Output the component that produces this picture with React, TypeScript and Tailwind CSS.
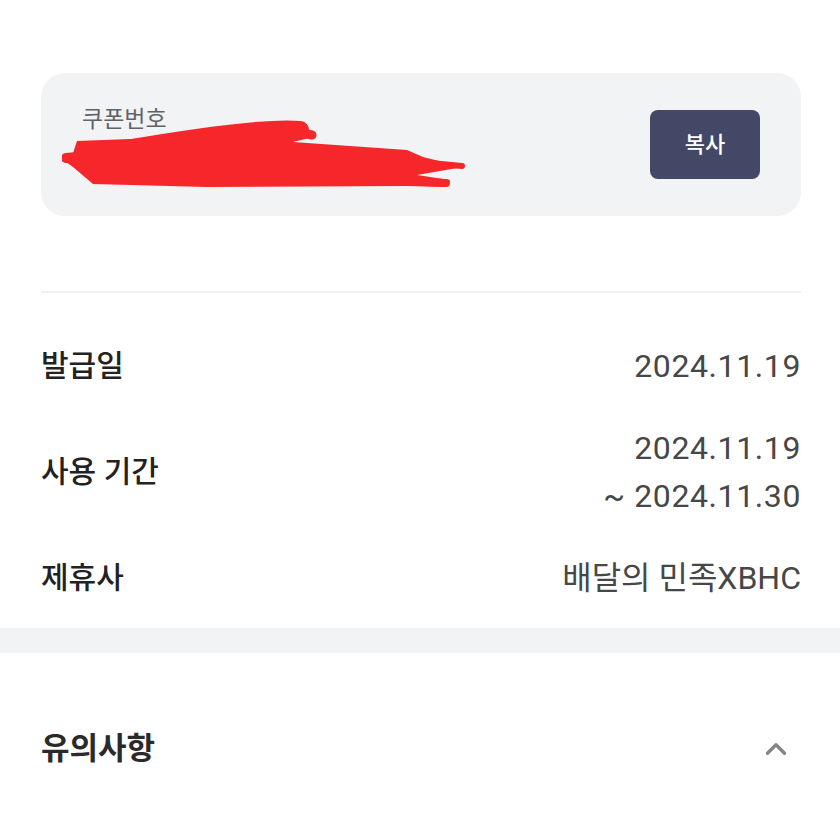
import { ChevronUp } from "lucide-react";

const font = { fontFamily: 'Roboto, "Noto Sans CJK KR", sans-serif' };

function InfoRow({ label, values, tight }: { label: string; values: string[]; tight?: boolean }) {
  return (
    <div className="flex items-center justify-between">
      <span className="text-[30px] leading-[48px] font-medium text-[#222222]">{label}</span>
      <div className="flex flex-col items-end">
        {values.map((v) => (
          <span
            key={v}
            className={
              tight
                ? "text-[32px] leading-[48px] font-normal text-[#474747]"
                : "text-[32px] leading-[48px] font-normal tracking-[0.6px] text-[#474747]"
            }
          >
            {v}
          </span>
        ))}
      </div>
    </div>
  );
}

function Scribble() {
  // hand-drawn red cover over the coupon number
  return (
    <svg
      width={406}
      height={70}
      viewBox="62 120 406 70"
      className="-ml-[20px] -mt-[13px]"
    >
      <polygon
        fill="#f5272b"
        points="77,141 157,138 240,125 293,123 313,137 293,142 407,150 423,157 463,167 417,175 450,180 447,187 407,186 207,187 93,184 73,167 63,160 73,153"
      />
      <g stroke="#f5272b" strokeLinecap="round" fill="none">
        <path d="M292 131 L312 135" strokeWidth={9} />
        <path d="M66 158 L100 155" strokeWidth={10} />
        <path d="M400 160 L462 166" strokeWidth={6} />
        <path d="M400 181 L446 183" strokeWidth={8} />
        <path d="M120 150 Q260 126 300 130" strokeWidth={18} />
      </g>
    </svg>
  );
}

export default function App() {
  return (
    <div className="min-h-screen w-full bg-white" style={font}>
      <div className="pl-[41px] pr-[39px] pt-[73px]">
        {/* coupon card */}
        <div className="flex h-[143px] items-center justify-between rounded-[24px] bg-[#f2f3f5] pl-[41px] pr-[41px]">
          <div className="flex flex-col self-start pt-[34px]">
            <span className="text-[23px] leading-[26px] text-[#5f6368]">쿠폰번호</span>
            <Scribble />
          </div>
          <button className="flex h-[69px] w-[110px] items-center justify-center rounded-[8px] bg-[#434866] text-[22px] font-medium text-white">
            복사
          </button>
        </div>

        <div className="mt-[75px] h-[2px] bg-[#f1f1f1]" />

        <div className="flex flex-col gap-[34px] pt-[49px] pb-[26px]">
          <InfoRow label="발급일" values={["2024.11.19"]} />
          <InfoRow label="사용 기간" values={["2024.11.19", "~ 2024.11.30"]} />
          <InfoRow label="제휴사" values={["배달의 민족XBHC"]} tight />
        </div>
      </div>

      <div className="h-[25px] bg-[#f2f3f5]" />

      <div className="flex items-center justify-between pl-[41px] pr-[39px] pt-[72px]">
        <span className="text-[31px] leading-[48px] font-bold text-[#2a2a2a]">유의사항</span>
        <ChevronUp className="mr-[8px] h-[34px] w-[34px] text-[#858585]" strokeWidth={2.4} />
      </div>
    </div>
  );
}
